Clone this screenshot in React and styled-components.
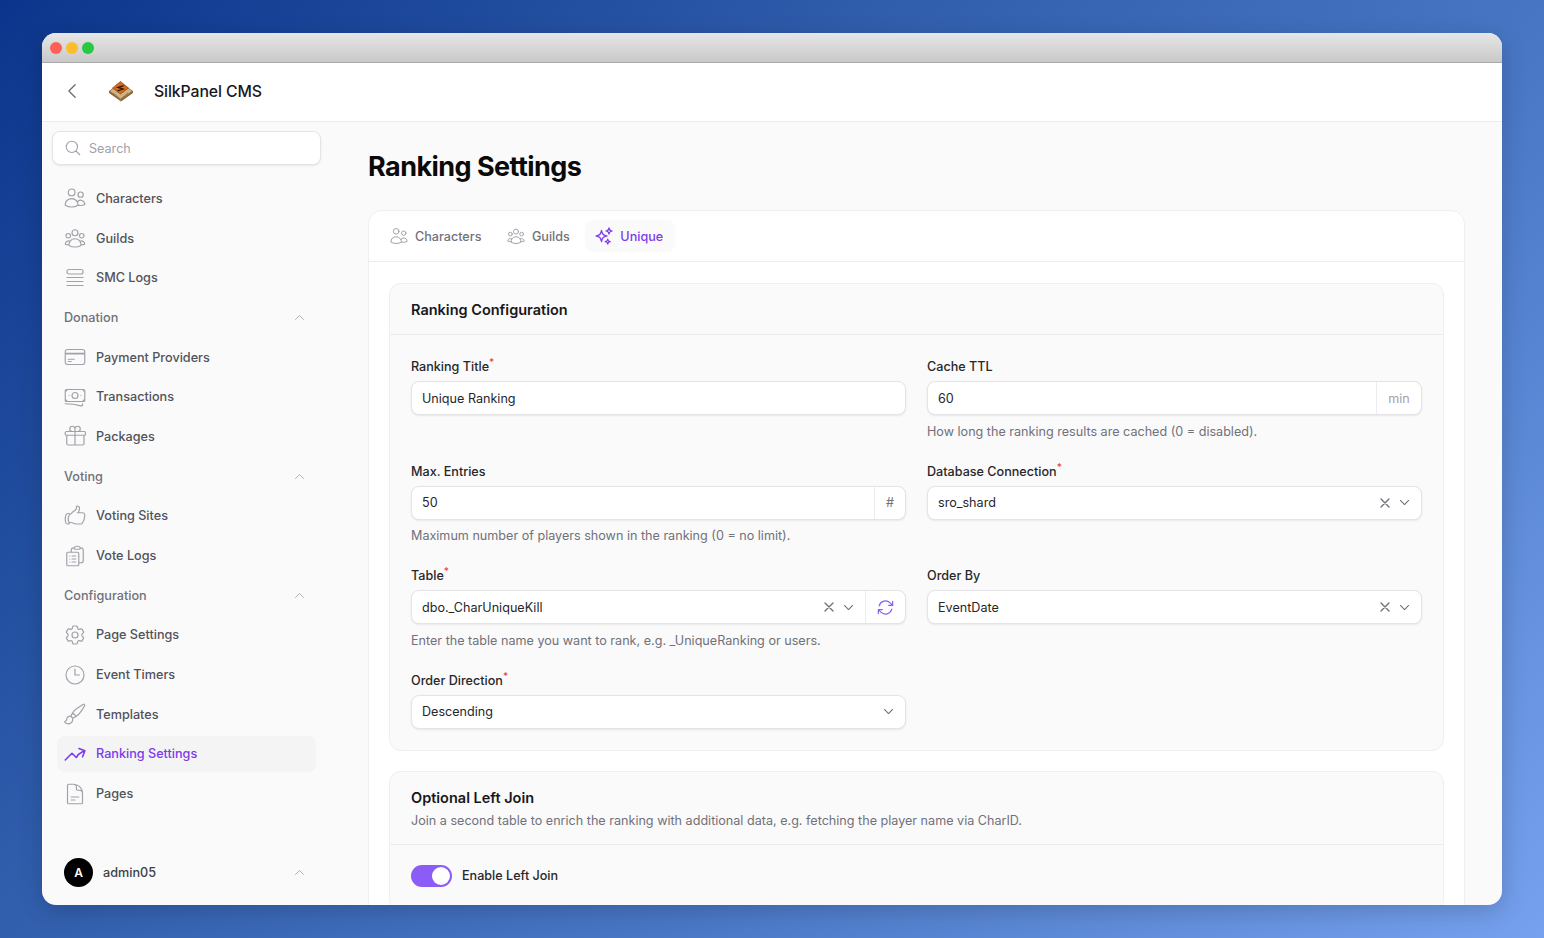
import React from 'react';
import styled, { createGlobalStyle } from 'styled-components';
import {
  HiOutlineUsers, HiOutlineUserGroup, HiOutlineCreditCard, HiOutlineBanknotes,
  HiOutlineGift, HiOutlineHandThumbUp, HiOutlineClipboardDocumentList, HiOutlineCog6Tooth, HiOutlineClock,
  HiOutlinePaintBrush, HiOutlineArrowTrendingUp, HiOutlineDocumentText, HiOutlineSparkles, HiOutlineArrowPath,
  HiOutlineMagnifyingGlass, HiOutlineChevronUp, HiOutlineChevronDown, HiOutlineChevronLeft, HiOutlineXMark,
} from 'react-icons/hi2';

const GlobalStyle = createGlobalStyle`
  html, body { margin: 0; padding: 0; }
  body { font-family: Inter, "Liberation Sans", sans-serif; -webkit-font-smoothing: antialiased; }
  * { box-sizing: border-box; }
`;

const Page = styled.div`
  width: 1544px;
  height: 938px;
  overflow: hidden;
  padding: 33px 42px;
  background: linear-gradient(135deg, #0b358c 0%, #2f5cab 35%, #4a78c6 65%, #76a1ee 100%);
`;

const Window = styled.div`
  height: 872px;
  border-radius: 14px;
  overflow: hidden;
  display: flex;
  flex-direction: column;
  background: #fafafa;
  box-shadow: 0 6px 24px rgba(0, 0, 0, 0.18);
`;

const TitleBar = styled.div`
  height: 30px;
  flex: none;
  display: flex;
  align-items: center;
  gap: 4px;
  padding-left: 8px;
  background: linear-gradient(#e6e6e6, #c9c9c9);
  border-bottom: 1px solid #a9a9a9;
`;

const Dot = styled.span`
  width: 12px;
  height: 12px;
  border-radius: 50%;
  background: ${(p) => p.$color};
`;

const Header = styled.header`
  height: 59px;
  flex: none;
  display: flex;
  align-items: center;
  background: #fff;
  border-bottom: 1px solid #ececee;
  color: #6b6b73;
  padding: 0 0 2px 20px;
`;

const Brand = styled.div`
  display: flex;
  align-items: center;
  gap: 20px;
  margin-left: 26px;
  font-size: 15.8px;
  font-weight: 500;
  color: #18181b;
  letter-spacing: -0.1px;
`;

const Body = styled.div`
  flex: 1;
  min-height: 0;
  display: flex;
`;

const Sidebar = styled.aside`
  width: 288px;
  flex: none;
  display: flex;
  flex-direction: column;
  padding: 9px 0 0 10px;
`;

const SearchBox = styled.div`
  width: 269px;
  height: 34px;
  display: flex;
  align-items: center;
  gap: 7px;
  padding-left: 11px;
  margin-bottom: 15.5px;
  background: #fff;
  border: 1px solid #e4e4e7;
  border-radius: 8px;
  box-shadow: 0 1px 2px rgba(0, 0, 0, 0.08);
  color: #a1a1aa;
  font-size: 12.6px;
`;

const NavList = styled.nav`
  display: flex;
  flex-direction: column;
  gap: 4px;
  width: 259px;
  margin-left: 5px;
`;

const NavItem = styled.div`
  height: 35.7px;
  display: flex;
  align-items: center;
  gap: 9px;
  padding-left: 6px;
  border-radius: 8px;
  font-size: 12.65px;
  font-weight: 500;
  color: ${(p) => (p.$active ? '#7c3aed' : '#52525b')};
  background: ${(p) => (p.$active ? '#f4f4f5' : 'transparent')};

  svg {
    flex: none;
    color: ${(p) => (p.$active ? '#7c3aed' : '#a1a1aa')};
  }
`;

const GroupLabel = styled.div`
  height: 35.7px;
  display: flex;
  align-items: center;
  justify-content: space-between;
  padding: 0 10px 0 7px;
  font-size: 12.65px;
  font-weight: 500;
  color: #71717a;

  svg {
    color: #a1a1aa;
  }
`;

const UserRow = styled.div`
  margin-top: auto;
  height: 32px;
  margin-bottom: 17px;
  width: 242px;
  margin-left: 12px;
  display: flex;
  align-items: center;
  gap: 10px;
  font-size: 12.65px;
  font-weight: 500;
  color: #3f3f46;

  svg {
    margin-left: auto;
    color: #a1a1aa;
  }
`;

const Avatar = styled.span`
  width: 29px;
  height: 29px;
  border-radius: 50%;
  background: #000;
  color: #fff;
  display: grid;
  place-items: center;
  font-size: 12px;
  font-weight: 600;
`;

const Main = styled.main`
  flex: 1;
  min-width: 0;
  padding: 28px 37px 0 38px;
  overflow: hidden;
`;

const PageTitle = styled.h1`
  margin: 0 0 26px;
  font-size: 27px;
  line-height: 34px;
  font-weight: 700;
  color: #0a0a0a;
  letter-spacing: -0.55px;
`;

const Card = styled.div`
  background: #fff;
  border: 1px solid #efeff1;
  border-radius: 14px;
  padding-bottom: 40px;
`;

const Tabs = styled.div`
  height: 51px;
  display: flex;
  align-items: center;
  gap: 4px;
  padding: 0 11px;
  border-bottom: 1px solid #ececee;
`;

const Tab = styled.div`
  height: 32px;
  display: flex;
  align-items: center;
  gap: 6px;
  padding: 0 11.5px 0 9px;
  border-radius: 8px;
  font-size: 12.6px;
  font-weight: 500;
  color: ${(p) => (p.$active ? '#7c3aed' : '#71717a')};
  background: ${(p) => (p.$active ? '#fafafa' : 'transparent')};

  svg {
    color: ${(p) => (p.$active ? '#7c3aed' : '#a1a1aa')};
  }
`;

const Sections = styled.div`
  display: flex;
  flex-direction: column;
  gap: 20px;
  padding: 21px 20px 0;
`;

const Section = styled.section`
  background: #fafafa;
  border: 1px solid #efeff1;
  border-radius: 12px;
`;

const SectionHead = styled.div`
  padding: ${(p) => (p.$tall ? '17px 21px 14px' : '17px 21px 15px')};
  border-bottom: 1px solid #ececee;
`;

const SectionTitle = styled.h2`
  margin: 0;
  font-size: 14.5px;
  line-height: 18px;
  font-weight: 600;
  color: #18181b;
`;

const SectionSub = styled.p`
  margin: 5px 0 0;
  font-size: 12.6px;
  line-height: 18px;
  color: #71717a;
`;

const FormGrid = styled.div`
  display: grid;
  grid-template-columns: 1fr 1fr;
  column-gap: 21px;
  row-gap: 22px;
  padding: 23px 21px 21px;
`;

const Field = styled.div`
  display: flex;
  flex-direction: column;
`;

const Label = styled.label`
  font-size: 12.6px;
  line-height: 17px;
  font-weight: 500;
  color: #27272a;
  margin-bottom: 6px;

  sup {
    color: #ef4444;
    font-size: 10px;
    line-height: 0;
  }
`;

const InputShell = styled.div`
  height: 34px;
  display: flex;
  align-items: center;
  background: #fff;
  border: 1px solid #e4e4e7;
  border-radius: 8px;
  box-shadow: 0 1px 2px rgba(0, 0, 0, 0.08);
  font-size: 12.6px;
  color: #27272a;
`;

const Value = styled.span`
  flex: 1;
  padding-left: 10px;
`;

const Addon = styled.span`
  height: 100%;
  width: ${(p) => p.$width}px;
  display: grid;
  place-items: center;
  border-left: 1px solid #ececee;
  color: ${(p) => p.$color || '#a1a1aa'};
`;

const SelectIcons = styled.span`
  display: flex;
  align-items: center;
  gap: 5px;
  padding-right: 10px;
  color: #71717a;
`;

const Help = styled.p`
  margin: 7.5px 0 0;
  font-size: 12.6px;
  line-height: 18px;
  color: #71717a;
`;

const ToggleRow = styled.div`
  display: flex;
  align-items: center;
  gap: 10px;
  padding: 20px 21px 24px;
  font-size: 12.6px;
  font-weight: 500;
  color: #27272a;
`;

const Toggle = styled.span`
  width: 41px;
  height: 22px;
  display: flex;
  justify-content: flex-end;
  align-items: center;
  padding-right: 2px;
  border-radius: 11px;
  background: #8b5cf6;
`;

const Knob = styled.span`
  width: 18px;
  height: 18px;
  border-radius: 50%;
  background: #fff;
`;

function Logo() {
  return (
    <svg width="26" height="22" viewBox="0 0 26 22">
      <path d="M1 11 12.5 2.5 25 11v2l-12 8.5L1 13z" fill="#8a6a3f" />
      <path d="M2 11 12.5 3.5 24 11l-11.5 8z" fill="#d0b283" />
      <path d="M12.5 19v2M5 13l7.5 6 7.5-6" fill="none" stroke="#9c7c4e" strokeWidth="1" />
      <path d="M4.5 8 12.5 1.5 20.5 8l-8 6z" fill="#d9691c" stroke="#7d4418" strokeWidth="0.7" />
      <path d="M15.5 5.6 10 7.4 15 9 9.5 10.8" fill="none" stroke="#2b1c10" strokeWidth="1.3" />
    </svg>
  );
}

function LogsIcon(props) {
  return (
    <svg width={props.size} height={props.size} viewBox="0 0 24 24" fill="none" stroke="currentColor" strokeWidth={props.strokeWidth} strokeLinecap="round">
      <rect x="4" y="3.5" width="16" height="4.5" rx="2" />
      <path d="M4 11.5h16M4 15.5h16M4 19.5h16" />
    </svg>
  );
}

const nav = [
  { label: 'Characters', icon: HiOutlineUsers },
  { label: 'Guilds', icon: HiOutlineUserGroup },
  { label: 'SMC Logs', icon: LogsIcon },
  { group: 'Donation' },
  { label: 'Payment Providers', icon: HiOutlineCreditCard },
  { label: 'Transactions', icon: HiOutlineBanknotes },
  { label: 'Packages', icon: HiOutlineGift },
  { group: 'Voting' },
  { label: 'Voting Sites', icon: HiOutlineHandThumbUp },
  { label: 'Vote Logs', icon: HiOutlineClipboardDocumentList },
  { group: 'Configuration' },
  { label: 'Page Settings', icon: HiOutlineCog6Tooth },
  { label: 'Event Timers', icon: HiOutlineClock },
  { label: 'Templates', icon: HiOutlinePaintBrush },
  { label: 'Ranking Settings', icon: HiOutlineArrowTrendingUp, active: true },
  { label: 'Pages', icon: HiOutlineDocumentText },
];

function SelectControls({ clear = true }) {
  return (
    <SelectIcons>
      {clear && <HiOutlineXMark size={16} strokeWidth={2} />}
      <HiOutlineChevronDown size={13} strokeWidth={2} />
    </SelectIcons>
  );
}

export default function App() {
  return (
    <Page>
      <GlobalStyle />
      <Window>
        <TitleBar>
          <Dot $color="#ff5f57" />
          <Dot $color="#febc2e" />
          <Dot $color="#28c840" />
        </TitleBar>
        <Header>
          <HiOutlineChevronLeft size={20} />
          <Brand>
            <Logo />
            SilkPanel CMS
          </Brand>
        </Header>
        <Body>
          <Sidebar>
            <SearchBox>
              <HiOutlineMagnifyingGlass size={18} />
              Search
            </SearchBox>
            <NavList>
              {nav.map((item) =>
                item.group ? (
                  <GroupLabel key={item.group}>
                    {item.group}
                    <HiOutlineChevronUp size={13} />
                  </GroupLabel>
                ) : (
                  <NavItem key={item.label} $active={item.active}>
                    <item.icon size={24} strokeWidth={item.active ? 1.6 : 1.2} />
                    {item.label}
                  </NavItem>
                )
              )}
            </NavList>
            <UserRow>
              <Avatar>A</Avatar>
              admin05
              <HiOutlineChevronUp size={13} />
            </UserRow>
          </Sidebar>
          <Main>
            <PageTitle>Ranking Settings</PageTitle>
            <Card>
              <Tabs>
                <Tab>
                  <HiOutlineUsers size={20} strokeWidth={1.2} />
                  Characters
                </Tab>
                <Tab>
                  <HiOutlineUserGroup size={20} strokeWidth={1.2} />
                  Guilds
                </Tab>
                <Tab $active>
                  <HiOutlineSparkles size={20} />
                  Unique
                </Tab>
              </Tabs>
              <Sections>
                <Section>
                  <SectionHead>
                    <SectionTitle>Ranking Configuration</SectionTitle>
                  </SectionHead>
                  <FormGrid>
                    <Field>
                      <Label>Ranking Title<sup>*</sup></Label>
                      <InputShell><Value>Unique Ranking</Value></InputShell>
                    </Field>
                    <Field>
                      <Label>Cache TTL</Label>
                      <InputShell>
                        <Value>60</Value>
                        <Addon $width={45}>min</Addon>
                      </InputShell>
                      <Help>How long the ranking results are cached (0 = disabled).</Help>
                    </Field>
                    <Field>
                      <Label>Max. Entries</Label>
                      <InputShell>
                        <Value>50</Value>
                        <Addon $width={31} $color="#71717a">#</Addon>
                      </InputShell>
                      <Help>Maximum number of players shown in the ranking (0 = no limit).</Help>
                    </Field>
                    <Field>
                      <Label>Database Connection<sup>*</sup></Label>
                      <InputShell>
                        <Value>sro_shard</Value>
                        <SelectControls />
                      </InputShell>
                    </Field>
                    <Field>
                      <Label>Table<sup>*</sup></Label>
                      <InputShell>
                        <Value>dbo._CharUniqueKill</Value>
                        <SelectControls />
                        <Addon $width={40} $color="#8b5cf6"><HiOutlineArrowPath size={19} /></Addon>
                      </InputShell>
                      <Help>Enter the table name you want to rank, e.g. _UniqueRanking or users.</Help>
                    </Field>
                    <Field>
                      <Label>Order By</Label>
                      <InputShell>
                        <Value>EventDate</Value>
                        <SelectControls />
                      </InputShell>
                    </Field>
                    <Field>
                      <Label>Order Direction<sup>*</sup></Label>
                      <InputShell>
                        <Value>Descending</Value>
                        <SelectControls clear={false} />
                      </InputShell>
                    </Field>
                  </FormGrid>
                </Section>
                <Section>
                  <SectionHead $tall>
                    <SectionTitle>Optional Left Join</SectionTitle>
                    <SectionSub>Join a second table to enrich the ranking with additional data, e.g. fetching the player name via CharID.</SectionSub>
                  </SectionHead>
                  <ToggleRow>
                    <Toggle><Knob /></Toggle>
                    Enable Left Join
                  </ToggleRow>
                </Section>
              </Sections>
            </Card>
          </Main>
        </Body>
      </Window>
    </Page>
  );
}
